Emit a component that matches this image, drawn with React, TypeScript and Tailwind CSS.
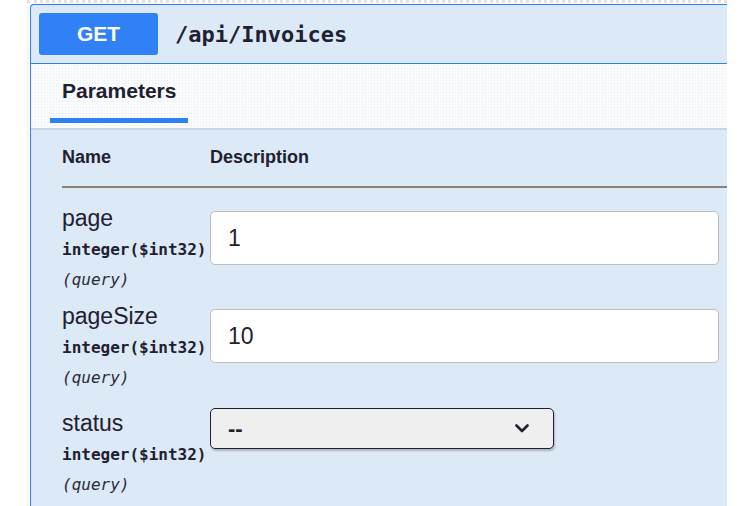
import React from 'react';

const params = [
  { name: 'page', value: '1', kind: 'input', rowClass: 'mt-0', nameClass: 'pt-0' },
  { name: 'pageSize', value: '10', kind: 'input', rowClass: 'mt-[9px]', nameClass: 'pt-0' },
  { name: 'status', value: '--', kind: 'select', rowClass: 'mt-[15px]', nameClass: 'pt-[3px]' },
];

const sans = 'font-["Liberation_Sans",Arial,sans-serif]';
const mono = 'font-["DejaVu_Sans_Mono","Liberation_Mono",monospace]';

const App: React.FC = () => {
  return (
    <div className="w-[753px] h-[506px] overflow-hidden bg-white">
      {/* faint selection frame round the block */}
      <div className="ml-[27px] w-[700px] h-[506px] border-t-[3px] border-l border-[#e2e2e2] border-dotted">
        <div className={`ml-[2px] mt-px h-[503px] border-t border-l border-[#2f80f0] rounded-tl-[4px] bg-[#dce9f6] text-[#1f2030] ${sans}`}>
          {/* summary */}
          <div className="flex items-center gap-[17px] pl-[8px] py-[8px] border-b border-[#2f80f0]">
            <div className="w-[119px] h-[42px] rounded-[3px] bg-[#3080f6] flex items-center justify-center text-white font-bold text-[21px]">
              GET
            </div>
            <span className={`${mono} font-bold text-[22px] text-[#1f2030]`}>/api/Invoices</span>
          </div>

          {/* tab header */}
          <div className="h-[66px] pl-[19px] bg-[#f9fbfd] bg-[radial-gradient(#e2edf6_0.6px,transparent_0.8px)] bg-[length:3px_3px] border-b-2 border-[#c6d6e2]">
            <div className="inline-flex flex-col pt-[14px]">
              <span className="px-[12px] leading-[26px] text-[21px] font-bold">Parameters</span>
              <span className="mt-[14px] h-[5px] bg-[#2f80f0]" />
            </div>
          </div>

          {/* parameter table */}
          <div className="pl-[31px]">
            <div className="flex pt-[15px] text-[18px] font-bold leading-[24px]">
              <span className="w-[148px]">Name</span>
              <span>Description</span>
            </div>
            <div className="mt-[17px] h-[2px] bg-[#8b807b]" />

            <div className="pt-[18px]">
              {params.map((p) => (
                <div key={p.name} className={`flex items-start ${p.rowClass}`}>
                  <div className={`w-[148px] shrink-0 ${p.nameClass}`}>
                    <div className="text-[23px] leading-[24px]">{p.name}</div>
                    <div className={`${mono} mt-[5px] text-[16px] font-bold leading-[30px] whitespace-nowrap`}>
                      integer($int32)
                    </div>
                    <div className={`${mono} text-[16px] italic leading-[30px] text-[#2a2b38]`}>(query)</div>
                  </div>
                  {p.kind === 'input' ? (
                    <div className="mt-[5px] w-[509px] h-[54px] rounded-[5px] border border-[#bdbdbd] bg-white flex items-center pl-[17px] text-[23px]">
                      {p.value}
                    </div>
                  ) : (
                    <div className="w-[344px] h-[41px] rounded-[5px] border border-[#202030] bg-[#efefef] shadow-[1px_2px_2px_rgba(0,0,0,0.22)] flex items-center justify-between pl-[17px] pr-[24px]">
                      <span className="text-[22px] font-bold leading-none">--</span>
                      <svg width="14" height="9" viewBox="0 0 14 9" fill="none">
                        <path d="M1.5 1.5 L7 7 L12.5 1.5" stroke="#202030" strokeWidth="2.6" strokeLinecap="round" strokeLinejoin="round" />
                      </svg>
                    </div>
                  )}
                </div>
              ))}
            </div>
          </div>
        </div>
      </div>
    </div>
  );
};

export default App;
